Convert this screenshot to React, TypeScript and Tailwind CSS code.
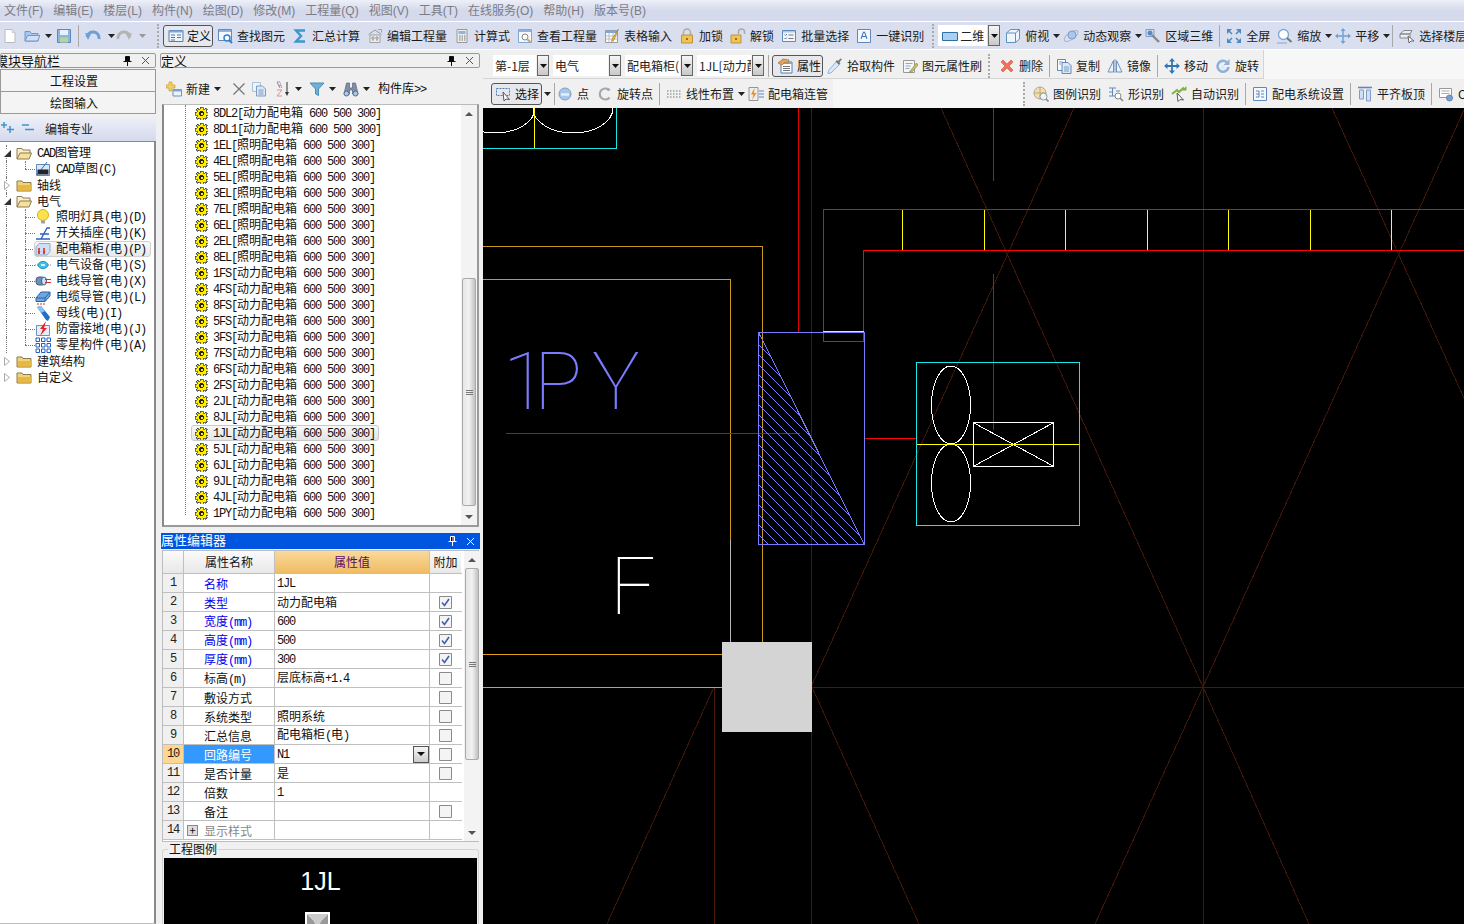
import type { ReactNode } from "react";

const CJK = '"Noto Sans CJK SC", sans-serif';

// Latin runs sit at half width (6px) beside the 12px CJK text, like a bitmap UI font
function T({ children }: { children: string }) {
  const parts = children.split(/([\x20-\x7e]+)/).filter(Boolean);
  return (
    <span className="whitespace-pre">
      {parts.map((p, i) =>
        /^[\x20-\x7e]/.test(p) ? (
          <span key={i} className="font-['Liberation_Mono',monospace] text-[12px] tracking-[-1.2px]">{p}</span>
        ) : (
          <span key={i}>{p}</span>
        )
      )}
    </span>
  );
}

function Ico({ children, size = 16 }: { children: ReactNode; size?: number }) {
  return (
    <svg width={size} height={size} viewBox="0 0 16 16" className="shrink-0" fill="none">
      {children}
    </svg>
  );
}

const Arrow = ({ ml = "ml-[4px]", dim }: { ml?: string; dim?: boolean }) => (
  <svg width="7" height="4" viewBox="0 0 7 4" className={`shrink-0 ${ml}`}>
    <path d="M0 0h7L3.5 4z" fill={dim ? "#999" : "#222"} />
  </svg>
);

const Grip = ({ ml }: { ml: string }) => (
  <div className={`h-[24px] w-[2px] shrink-0 border-l-2 border-dotted border-[#aaa] ${ml}`} />
);

const Sep = ({ ml = "ml-[6px]" }: { ml?: string }) => (
  <div className={`h-[22px] w-px shrink-0 bg-[#a8a8a8] ${ml}`} />
);

function Tool({ icon, label, ml = "ml-[7px]", arrow }: { icon: ReactNode; label: string; ml?: string; arrow?: boolean }) {
  return (
    <div className={`flex shrink-0 items-center ${ml}`}>
      {icon}
      <span className="ml-[4px] whitespace-nowrap text-[12px] leading-none text-[#1a1a1a]">{label}</span>
      {arrow && <Arrow />}
    </div>
  );
}

function Pressed({ icon, label, className }: { icon: ReactNode; label: string; className: string }) {
  return (
    <div className={`flex h-[22px] shrink-0 items-center rounded-[3px] border border-[#555] bg-[#e6e8ee] pl-[4px] ${className}`}>
      {icon}
      <span className="ml-[3px] whitespace-nowrap text-[12px] leading-none text-[#111]">{label}</span>
    </div>
  );
}

function Combo({ label, w, ml = "ml-[4px]" }: { label: string; w: string; ml?: string }) {
  return (
    <div className={`flex h-[21px] shrink-0 items-center ${ml}`}>
      <div className={`flex h-full items-center overflow-hidden whitespace-nowrap bg-white pl-[2px] text-[12px] text-[#222] ${w}`}>{label}</div>
      <div className="ml-px flex h-full w-[12px] items-center justify-center border border-[#666] bg-gradient-to-b from-[#f6f6f6] to-[#c8c8c8]">
        <svg width="7" height="4" viewBox="0 0 7 4"><path d="M0 0h7L3.5 4z" fill="#111" /></svg>
      </div>
    </div>
  );
}

function PanelHead({ title, titleClass = "" }: { title: string; titleClass?: string }) {
  return (
    <div className="flex h-[15px] items-center overflow-x-clip rounded-[2px] border border-[#9a9a9a] bg-[#f0f0f0]">
      <span className={`whitespace-nowrap text-[13px] leading-none text-[#111] ${titleClass}`}>{title}</span>
      <div className="flex-1" />
      <PinClose color="#111" />
    </div>
  );
}

const PinClose = ({ color }: { color: string }) => (
  <div className="flex items-center gap-[9px] pr-[5px]">
    <svg width="9" height="10" viewBox="0 0 9 10"><path d="M2.5.5h4v5h-4zM5 1v4.5M.5 5.5h8M4.5 5.5V10" stroke={color} /></svg>
    <svg width="9" height="9" viewBox="0 0 9 9"><path d="M1 1l7 7M8 1L1 8" stroke={color === "#fff" ? "#fff" : "#555"} /></svg>
  </div>
);

function ScrollBar({ top, thumb, className }: { top: string; thumb: string; className: string }) {
  return (
    <div className={`flex w-[16px] shrink-0 flex-col items-center bg-[#f3f3f3] ${className}`}>
      <div className="flex h-[17px] items-center justify-center">
        <svg width="8" height="4" viewBox="0 0 8 4"><path d="M4 0l4 4H0z" fill="#555" /></svg>
      </div>
      <div className={top} />
      <div className={`flex w-[14px] flex-col justify-center rounded-[2px] border border-[#aaa] bg-gradient-to-r from-[#e6e6e6] via-[#f2f2f2] to-[#c0c0c0] ${thumb}`}>
        <div className="mx-auto flex w-[7px] flex-col gap-px">
          <div className="h-px bg-[#777]" /><div className="h-px bg-[#777]" /><div className="h-px bg-[#777]" />
        </div>
      </div>
      <div className="flex-1" />
      <div className="flex h-[16px] items-center justify-center">
        <svg width="8" height="4" viewBox="0 0 8 4"><path d="M0 0h8L4 4z" fill="#555" /></svg>
      </div>
    </div>
  );
}

/* ---- toolbar icons ---- */
const I = {
  doc: <Ico><path d="M3 1.5h7l3 3v10H3z" fill="#fff" stroke="#bbb" /><path d="M10 1.5v3h3" stroke="#ccc" /></Ico>,
  open: <Ico><path d="M1 13V3.5h5l1.5 2H14V13z" fill="#a9c6ec" stroke="#6f97cc" /><path d="M1 13l2.5-5.5H16L13.5 13z" fill="#cfe0f6" stroke="#6f97cc" /></Ico>,
  save: <Ico><path d="M1.5 1.5h13v13h-13z" fill="#8fb4e0" stroke="#5f88bd" /><path d="M4 2h8v5H4z" fill="#e8f0fa" /><path d="M4 9.5h8v5H4z" fill="#b5d59a" /></Ico>,
  undo: <Ico><path d="M2 9a6 6 0 0 1 12 2" stroke="#6f9fd6" strokeWidth="3" /><path d="M0 5l6 1-3 6z" fill="#6f9fd6" /></Ico>,
  redo: <Ico><path d="M14 9a6 6 0 0 0-12 2" stroke="#b4b4b4" strokeWidth="3" /><path d="M16 5l-6 1 3 6z" fill="#b4b4b4" /></Ico>,
  define: <Ico><path d="M1 2.5h14v11H1z" fill="#eef4fb" stroke="#4f7fb5" /><path d="M1 2.5h14v2H1z" fill="#7fa8d6" /><path d="M3 7h4M3 9.5h4M3 12h4M9 7h4M9 9.5h4" stroke="#55789f" /></Ico>,
  find: <Ico><path d="M1.5 1.5h13v11h-13z" fill="#f4f8fc" stroke="#5f88bd" /><path d="M2 2h12v2H2z" fill="#8fb4e0" /><circle cx="10" cy="10" r="3" fill="#fff" stroke="#2f7fc8" strokeWidth="1.4" /><path d="M12 12l3 3" stroke="#2f7fc8" strokeWidth="2" /></Ico>,
  sigma: <Ico><path d="M13 2.5H4l5 5.5-5 5.5h9" stroke="#3c95d0" strokeWidth="2.4" /></Ico>,
  edit: <Ico><path d="M1.5 6.5L8 2l6.5 4.5" stroke="#999" /><path d="M3 7h10v7.5H3z" fill="#eee" stroke="#a0a0a0" /><path d="M5 9h2v2H5zM9 9h2v2H9zM5 12h2M9 12h2" stroke="#999" /><path d="M11 1.5h3.5v3" stroke="#7fa8d6" /></Ico>,
  calc: <Ico><path d="M3 1.5h10v13H3z" fill="#eee" stroke="#999" /><path d="M4.5 3h7v3h-7z" fill="#8fb4e0" /><path d="M5 8h1.5M7.5 8H9M10 8h1.5M5 10h1.5M7.5 10H9M10 10h1.5M5 12h1.5M7.5 12H9M10 12h1.5" stroke="#777" /></Ico>,
  look: <Ico><path d="M1.5 1.5h13v13h-13z" fill="#f6f8fb" stroke="#7fa8d6" /><path d="M2 2h12v2H2z" fill="#8fb4e0" /><circle cx="8" cy="9" r="3" fill="#fff" stroke="#888" /><path d="M10.5 11.5l3 2.5" stroke="#d9a441" strokeWidth="2" /></Ico>,
  table: <Ico><path d="M1.5 2.5h12v12h-12z" fill="#fff" stroke="#999" /><path d="M1.5 2.5h12v2.5h-12z" fill="#7fa8d6" /><path d="M1.5 8h12M1.5 11h12M5 5v9.5M9 5v9.5" stroke="#bbb" /><path d="M14.5 1L8 11l-.5 2.5L10 12z" fill="#e8b83a" stroke="#a87f1e" strokeWidth=".6" /></Ico>,
  lock: <Ico><path d="M4.5 7V4.5a3.5 3.5 0 0 1 7 0V7" stroke="#aaa" strokeWidth="1.5" /><path d="M2.5 7h11v8h-11z" fill="#f0c453" stroke="#c0923a" /><path d="M7 10h2v2H7z" fill="#9a6f20" /></Ico>,
  unlock: <Ico><path d="M8.5 6V4a3 3 0 0 1 6 0v2" stroke="#aaa" strokeWidth="1.5" /><path d="M1 7h10v8H1z" fill="#f0c453" stroke="#c0923a" /><path d="M5 10h2v2H5z" fill="#9a6f20" /></Ico>,
  batch: <Ico><path d="M1.5 2.5h13v11h-13z" fill="#f4f8fc" stroke="#5f88bd" /><path d="M2 3h12v1.5H2z" fill="#a9c6ec" /><path d="M3.5 6.5l1 1 1.5-1.5M3.5 10l1 1 1.5-1.5" stroke="#4a78ad" /><path d="M7.5 7h5M7.5 10.5h5" stroke="#777" /></Ico>,
  ocr: <Ico><path d="M1.5 1.5h13v13h-13z" fill="#f4f8fc" stroke="#5f88bd" /><path d="M5 11l2.5-7h1l2.5 7M6 8.5h4" stroke="#2f6fb5" /></Ico>,
  view2d: <Ico><path d="M.5 4.5h15v8H.5z" fill="#a9d0ee" stroke="#2f6fa8" /></Ico>,
  cube: <Ico><path d="M1.5 5l4-3.5h9v9.5l-4 3.5h-9z" fill="#eef6fb" stroke="#5c93bd" /><path d="M1.5 5h9v9.5M10.5 5l4-3.5" stroke="#5c93bd" /></Ico>,
  orbit: <Ico><ellipse cx="8" cy="8" rx="8" ry="3.5" transform="rotate(-35 8 8)" stroke="#a9b6c8" /><circle cx="9" cy="7" r="4" fill="#a9c6ec" stroke="#7f9cc4" /></Ico>,
  zone: <Ico><path d="M1 1.5h8v7H1z" fill="#cfe0f6" stroke="#7f9cc4" /><circle cx="5" cy="5" r="2.5" fill="#5f88bd" /><path d="M7 7l7 7" stroke="#888" strokeWidth="2.4" /></Ico>,
  full: <Ico><path d="M1 1h5L1 6zM15 1h-5l5 5zM1 15h5l-5-5zM15 15h-5l5-5z" fill="#4a8bc4" /><path d="M3 3l3 3M13 3l-3 3M3 13l3-3M13 13l-3-3" stroke="#4a8bc4" strokeWidth="1.5" /></Ico>,
  zoom: <Ico><circle cx="6.5" cy="6.5" r="5" fill="#fff" stroke="#7fa8d6" strokeWidth="1.4" /><path d="M10 10l4.5 4" stroke="#777" strokeWidth="2" /><path d="M0 15h10" stroke="#7fa8d6" /></Ico>,
  pan: <Ico><path d="M8 1v14M1 8h14" stroke="#6fa0d6" strokeWidth="1.4" /><path d="M8 0l2.5 3h-5zM8 16l2.5-3h-5zM0 8l3-2.5v5zM16 8l-3-2.5v5z" fill="#6fa0d6" /></Ico>,
  floors: <Ico><path d="M1 6l4-3.5h8L11 6zM1 6h10v4H1z" fill="#e8eef6" stroke="#888" /><path d="M9 8l1 7 2-2 3 0z" fill="#fff" stroke="#666" /></Ico>,
  prop: <Ico><path d="M3 4h11v11H3z" fill="#fff" stroke="#4f7fb5" /><path d="M3 4h11v2H3z" fill="#7fa8d6" /><path d="M5 8.5h7M5 10.5h7M5 12.5h7" stroke="#777" /><path d="M0 5l5-4 6 1-1 3-3-.5-3 2.5z" fill="#e2a25c" stroke="#a8702e" strokeWidth=".7" /></Ico>,
  pick: <Ico><path d="M15 1l-1.5-.5-2.5 2.5-1-1-1.5 1.5 3.5 3.5L13.5 5.5l-1-1z" fill="#777" /><path d="M9 4l3 3-8 8-3 .5.5-3z" fill="#dbe8f5" stroke="#8fb4e0" /></Ico>,
  brush: <Ico><path d="M1.5 2.5h11v12h-11z" fill="#f6f6f6" stroke="#999" /><path d="M3.5 5.5h7M3.5 8h5M3.5 10.5h4" stroke="#8fa8c4" /><path d="M14.5 5L9 12l-2 2.5 3.5-1L16 7z" fill="#c8c070" stroke="#8c8440" strokeWidth=".7" /></Ico>,
  del: <Ico><path d="M2 4l2-2 4 4 4-4 2 2-4 4 4 4-2 2-4-4-4 4-2-2 4-4z" fill="#f0705c" stroke="#d0503c" strokeWidth=".6" /></Ico>,
  copy: <Ico><path d="M1.5 1.5h8v11h-8z" fill="#fff" stroke="#5f88bd" /><path d="M6 4.5h6l3 3v8H6z" fill="#dbe8f5" stroke="#5f88bd" /><path d="M3 4h4M3 6h2M8 9h5M8 11h5M8 13h5" stroke="#7f9cc4" /></Ico>,
  mirror: <Ico><path d="M8 1v14" stroke="#7f9cc4" /><path d="M6.5 2.5V14H1zM9.5 2.5V14H15z" fill="#eef4fb" stroke="#6f8fc0" /></Ico>,
  move: <Ico><path d="M8 1v14M1 8h14" stroke="#2f78b8" strokeWidth="1.8" /><path d="M8 0l3 3.5H5zM8 16l3-3.5H5zM0 8l3.5-3v6zM16 8l-3.5-3v6z" fill="#2f78b8" /></Ico>,
  rotate: <Ico><path d="M13.5 9a5.5 5.5 0 1 1-2-5" stroke="#8fb0d8" strokeWidth="2.6" /><path d="M14.5 1v6h-6z" fill="#8fb0d8" /><circle cx="8" cy="9" r="2" fill="#dbe8f5" /></Ico>,
  select: <Ico><path d="M.5 2.5h13v7H.5z" stroke="#4f7fb5" strokeDasharray="2 1" /><path d="M7 6l1 9 2-2 3.5.5z" fill="#fff" stroke="#555" /></Ico>,
  point: <Ico><circle cx="8" cy="8" r="6" fill="#a9c6ec" stroke="#7f9cc4" /><path d="M4 8.5h8" stroke="#e8f0fa" strokeWidth="2.4" /></Ico>,
  rotPoint: <Ico><path d="M12.5 11.5a5.5 5.5 0 1 1 0-7" stroke="#a0a8b0" strokeWidth="2.2" /><path d="M9 1.5l1.5 3.5 3-2z" fill="#a0a8b0" /></Ico>,
  linear: <Ico><path d="M1 5h1.5M4 5h1.5M7 5h1.5M10 5h1.5M13 5h1.5M1 8h1.5M4 8h1.5M7 8h1.5M10 8h1.5M13 8h1.5M1 11h1.5M4 11h1.5M7 11h1.5M10 11h1.5M13 11h1.5" stroke="#777" /></Ico>,
  conduit: <Ico><path d="M1 1.5h9v13H1z" fill="#eee" stroke="#8c98a8" /><path d="M6.5 2L3 8.5h2.5L4 14l4.5-7H6z" fill="#e89020" /><path d="M11 5h5M11 8h5M11 11h5" stroke="#5f88bd" /></Ico>,
  legend: <Ico><circle cx="7" cy="7" r="6" fill="#f2ddb0" stroke="#a8a8a8" /><path d="M1 7h12M7 1v12" stroke="#c8a860" /><circle cx="10.5" cy="10.5" r="3.5" fill="#fff" fillOpacity=".7" stroke="#7f9cc4" /><path d="M13 13l2.5 2.5" stroke="#888" strokeWidth="1.6" /></Ico>,
  shape: <Ico><path d="M1 2h7M4.5 2v8M1 6h3M8 5h4M1 10h6" stroke="#5f88bd" /><circle cx="10" cy="10" r="3" fill="#fff" stroke="#888" /><path d="M12 12l3 3" stroke="#888" strokeWidth="1.6" /></Ico>,
  auto: <Ico><path d="M1 8l5-4 2 2 5-4.5" stroke="#7fb040" strokeWidth="2" /><path d="M15.5 0v4.5H11z" fill="#7fb040" /><path d="M6 7l1 8.5 2-2 3.5.5z" fill="#fff" stroke="#555" /></Ico>,
  sys: <Ico><path d="M1.5 1.5h13v13h-13z" fill="#f4f8fc" stroke="#5f88bd" /><path d="M4 5h3M4 8h3M4 11h3M9 5h3M9 8h3M9 11h3M7 5v6" stroke="#5f88bd" /></Ico>,
  align: <Ico><path d="M1 1.5h14" stroke="#5f88bd" strokeWidth="1.6" /><path d="M2.5 4h4v9h-4zM9.5 4h4v11h-4z" fill="#cfe0f6" stroke="#7f9cc4" /></Ico>,
  cad: <Ico><path d="M1.5 2.5h12v9h-12z" fill="#fff" stroke="#999" /><path d="M3.5 5h8M3.5 7.5h8" stroke="#aaa" /><circle cx="11.5" cy="12" r="3" fill="#7f9cc4" stroke="#5f88bd" /></Ico>,
  add: <Ico><path d="M0 4h3V1h3v3h3v3H6v3H3V7H0z" fill="#f0d060" stroke="#c8a030" strokeWidth=".7" /><path d="M7 8.5h8.5V15H7z" fill="#eef4fb" stroke="#6f8fc0" /><path d="M7 8.5h8.5v2H7z" fill="#7fa8d6" /></Ico>,
  x: <Ico><path d="M2.5 2.5l11 11M13.5 2.5l-11 11" stroke="#777" strokeWidth="1.3" /></Ico>,
  copy2: <Ico><path d="M1.5 1.5h8v9h-8z" fill="#eef4fb" stroke="#a9c0dc" /><path d="M5.5 5h6l3 3v7h-9z" fill="#dbe8f5" stroke="#7f9cc4" /><path d="M7.5 9h5M7.5 11h5M7.5 13h5" stroke="#7f9cc4" /></Ico>,
  sort: <Ico><path d="M2 1l2.5-.5L7 7M3 4.5h3M2 9h5l-5 6h5" stroke="#e09090" /><path d="M2 1l3 6" stroke="#6f8fc0" /><path d="M12 1v12" stroke="#333" /><path d="M10 11l2 4 2-4z" fill="#333" /></Ico>,
  filter: <Ico><path d="M1 2h14l-5.5 6v6.5l-3-1.5V8z" fill="#6fb0d8" stroke="#4a8fb8" /></Ico>,
  bino: <Ico><path d="M3.5 2h3v5h3V2h3l2.5 11h-5.5V9h-3v4H1z" fill="#7f8ea8" stroke="#5a6880" strokeWidth=".7" /><circle cx="3.5" cy="12.5" r="2.5" fill="#a9c6ec" stroke="#5a6880" /><circle cx="12.5" cy="12.5" r="2.5" fill="#a9c6ec" stroke="#5a6880" /></Ico>,
};

/* ---- tree icons ---- */
const FolderClosed = <Ico><path d="M1 4h5l1 1.5h8V14H1z" fill="#f3d27e" stroke="#8a7a50" /><path d="M2 8h13v5.5H2z" fill="#e8b93e" /></Ico>;
const FolderOpen = <Ico><path d="M1 14V3.5h5l1 1.5h7v3" fill="#fbeec8" stroke="#8a7a50" /><path d="M1 14l3-6h11.5L13 14z" fill="#f7dfa0" stroke="#8a7a50" /></Ico>;
const treeIcons: Record<string, ReactNode> = {
  cad: <Ico><path d="M1.5 3.5h13v11h-13z" fill="#dbe8f5" stroke="#5f88bd" /><path d="M2 14l10-13" stroke="#2f6fb5" /><path d="M2.5 8.5h11v5h-11z" fill="#223" /></Ico>,
  lamp: <Ico><circle cx="8" cy="6" r="5.5" fill="#fbe24a" stroke="#d8b020" /><path d="M6 11.5h4v3H6z" fill="#a0a0a0" /></Ico>,
  sw: <Ico><path d="M1 14h5L12 3h3M6 14h9M5 9h9" stroke="#2f5fc0" strokeWidth="1.3" /></Ico>,
  box: <Ico><path d="M1 6l3-3.5h11v8l-3 3.5H1z" fill="#cfe0f6" stroke="#8fa8c4" /><path d="M4 7v6M9 7v6" stroke="#d83020" strokeWidth="1.6" /><path d="M2.5 10.5L4 13l1.5-2.5zM7.5 10.5L9 13l1.5-2.5z" fill="#d83020" /></Ico>,
  dev: <Ico><path d="M0 8h5M11 8h5" stroke="#888" strokeDasharray="1 1" /><ellipse cx="8" cy="8" rx="5" ry="3.5" fill="#40c0e8" stroke="#2090b8" /><path d="M6 8h4" stroke="#fff" strokeWidth="1.5" /></Ico>,
  wire: <Ico><rect x="1" y="4" width="9" height="8" rx="3" fill="#6f8fb5" stroke="#3f5f85" /><ellipse cx="9" cy="8" rx="2.5" ry="4" fill="#cfe0f6" stroke="#3f5f85" /><path d="M10 6.5h6M10 9.5h6" stroke="#d83020" /></Ico>,
  cable: <Ico><path d="M1 9l5-6h9v4l-5 5.5H1z" fill="#6fa8e0" stroke="#2f5fa8" /><path d="M1 9h9v3.5M10 9l5-6" stroke="#2f5fa8" /><path d="M3 14v2M6 14v2M9 14v2" stroke="#d83020" /></Ico>,
  bus: <Ico><path d="M2 2l4-1 9 11-2 4-2-1z" fill="#1f6fc8" /><path d="M2 2l4-1 4 5-4 2z" fill="#8fc0ec" /></Ico>,
  thunder: <Ico><path d="M1.5 4.5h13v10h-13z" fill="#e4eef9" stroke="#6f8fc0" /><path d="M11 0L5 8h3l-3 7 7-8H9z" fill="#e82020" /></Ico>,
  parts: <Ico><path d="M1 1h3.5v3.5H1zM6.5 1H10v3.5H6.5zM12 1h3.5v3.5H12zM1 6.5h3.5V10H1zM6.5 6.5H10V10H6.5zM12 6.5h3.5V10H12zM1 12h3.5v3.5H1zM6.5 12H10v3.5H6.5zM12 12h3.5v3.5H12z" fill="#fff" stroke="#1f5fc8" /></Ico>,
};

const treeChildren = [
  { k: "lamp", t: "照明灯具(电)(D)" },
  { k: "sw", t: "开关插座(电)(K)" },
  { k: "box", t: "配电箱柜(电)(P)", sel: true },
  { k: "dev", t: "电气设备(电)(S)" },
  { k: "wire", t: "电线导管(电)(X)" },
  { k: "cable", t: "电缆导管(电)(L)" },
  { k: "bus", t: "母线(电)(I)" },
  { k: "thunder", t: "防雷接地(电)(J)" },
  { k: "parts", t: "零星构件(电)(A)" },
];

function Top({ open, label, line = true }: { open: boolean; label: string; line?: boolean }) {
  return (
    <div className="relative flex h-[16px] items-center">
      {line && <div className="absolute left-[6px] top-0 h-full border-l border-dotted border-[#777]" />}
      <div className="relative z-10 ml-[3px] flex w-[8px] justify-center bg-white">
        {open ? (
          <svg width="7" height="7" viewBox="0 0 7 7"><path d="M7 0v7H0z" fill="#333" /></svg>
        ) : (
          <svg width="6" height="9" viewBox="0 0 6 9"><path d="M.5.5l5 4-5 4z" fill="#fff" stroke="#aaa" /></svg>
        )}
      </div>
      <div className="ml-[5px]">{open ? FolderOpen : FolderClosed}</div>
      <span className="ml-[5px] text-[12px] leading-none text-[#111]"><T>{label}</T></span>
    </div>
  );
}

function Child({ icon, label, sel, last }: { icon: ReactNode; label: string; sel?: boolean; last?: boolean }) {
  return (
    <div className="relative flex h-[16px] items-center pl-[35px]">
      <div className="absolute left-[6px] top-0 h-full border-l border-dotted border-[#777]" />
      <div className={`absolute left-[25px] top-0 border-l border-dotted border-[#777] ${last ? "h-[8px]" : "h-full"}`} />
      <div className="absolute left-[25px] top-[8px] w-[10px] border-t border-dotted border-[#777]" />
      {sel && <div className="absolute left-[34px] top-0 h-[16px] w-[117px] rounded-[3px] border border-[#d0d0d0] bg-gradient-to-b from-[#fafafa] to-[#e8e8e8]" />}
      <div className="relative">{icon}</div>
      <span className="relative ml-[5px] text-[12px] leading-none text-[#111]"><T>{label}</T></span>
    </div>
  );
}

const listRows = [
  ["8DL2", "动力"], ["8DL1", "动力"], ["1EL", "照明"], ["4EL", "照明"], ["5EL", "照明"], ["3EL", "照明"], ["7EL", "照明"],
  ["6EL", "照明"], ["2EL", "照明"], ["8EL", "照明"], ["1FS", "动力"], ["4FS", "动力"], ["8FS", "动力"], ["5FS", "动力"],
  ["3FS", "动力"], ["7FS", "动力"], ["6FS", "动力"], ["2FS", "动力"], ["2JL", "动力"], ["8JL", "动力"], ["1JL", "动力"],
  ["5JL", "动力"], ["6JL", "动力"], ["9JL", "动力"], ["4JL", "动力"], ["1PY", "动力"],
];

const Gear = () => (
  <svg width="13" height="13" viewBox="0 0 13 13" className="shrink-0" shapeRendering="crispEdges">
    <path d="M5 0h3v2h2V1h1v1h1v1h-1v2h2v3h-2v2h1v1h-1v1h-1v-1H8v2H5v-2H3v1H2v-1H1v-1h1V8H0V5h2V3H1V2h1V1h1v1h2z" fill="#ffee00" stroke="#222" strokeWidth=".6" />
    <path d="M5 4h3v1h1v3H8v1H5V8H4V5h1z" fill="#222" />
    <path d="M5.500 5.500h2v2h-2z" fill="#ffee00" />
  </svg>
);

type Prop = { name: string; value: string; blue?: boolean; check?: boolean; none?: boolean; active?: boolean; gray?: boolean };
const props: Prop[] = [
  { name: "名称", value: "1JL", blue: true, none: true },
  { name: "类型", value: "动力配电箱", blue: true, check: true },
  { name: "宽度(mm)", value: "600", blue: true, check: true },
  { name: "高度(mm)", value: "500", blue: true, check: true },
  { name: "厚度(mm)", value: "300", blue: true, check: true },
  { name: "标高(m)", value: "层底标高+1.4" },
  { name: "敷设方式", value: "" },
  { name: "系统类型", value: "照明系统" },
  { name: "汇总信息", value: "配电箱柜(电)" },
  { name: "回路编号", value: "N1", active: true },
  { name: "是否计量", value: "是" },
  { name: "倍数", value: "1", none: true },
  { name: "备注", value: "" },
  { name: "显示样式", value: "", none: true, gray: true },
];

function PropRow({ p, n }: { p: Prop; n: number }) {
  return (
    <div className="flex h-[19px] border-b border-[#c0c0c0] text-[12px] leading-none">
      <div className={`flex w-[21px] shrink-0 items-center justify-center border-r border-[#c0c0c0] text-[#222] ${p.active ? "bg-[#ffd68f]" : "bg-[#f0f0f0]"}`}>
        <span className="font-['Liberation_Mono',monospace] text-[12px] tracking-[-1.2px]">{n}</span>
      </div>
      <div className={`relative flex w-[91px] shrink-0 items-center border-r border-[#c0c0c0] pl-[20px] pt-px ${p.active ? "bg-[#3399ff] text-white" : p.blue ? "text-[#0000ee]" : p.gray ? "text-[#888]" : "text-[#111]"}`}>
        {p.gray && (
          <div className="absolute left-[3px] flex h-[11px] w-[11px] items-center justify-center border border-[#888] bg-[#ddd] text-[11px] text-[#111]">+</div>
        )}
        <T>{p.name}</T>
      </div>
      <div className="flex w-[155px] shrink-0 items-center border-r border-[#c0c0c0] pl-[2px] text-[#111]">
        <T>{p.value}</T>
        {p.active && (
          <div className="ml-auto flex h-[17px] w-[16px] items-center justify-center border border-[#555] bg-gradient-to-b from-[#f6f6f6] to-[#ccc]">
            <svg width="8" height="4" viewBox="0 0 8 4"><path d="M0 0h8L4 4z" fill="#111" /></svg>
          </div>
        )}
      </div>
      <div className="flex w-[31px] shrink-0 items-center justify-center">
        {!p.none && (
          <svg width="13" height="13" viewBox="0 0 13 13">
            <path d="M.5.5h12v12H.5z" fill="#f4f4f4" stroke="#8a8a8a" />
            {p.check && <path d="M3 6.5l2.5 3L10 3" stroke="#3f5fa8" strokeWidth="1.6" fill="none" />}
          </svg>
        )}
      </div>
    </div>
  );
}

const BROWN = "#4a1a08";
const PURPLE = "#7b7bff";

function CadCanvas() {
  const yellowTicks = [902, 984, 1065, 1147, 1228, 1310, 1391];
  const hatch = Array.from({ length: 22 }, (_, i) => 335 + i * 10);
  const diag = [
    [1074, 108, 811, 687], [941, 108, 1203, 687], [1332, 108, 1464, 398], [1464, 110, 1203, 687],
    [812, 687, 919, 924], [1203, 687, 1095, 924], [1203, 687, 1309, 924], [714, 687, 607, 924],
  ];
  return (
    <svg className="block h-full w-full" viewBox="483 108 981 816" shapeRendering="crispEdges" fill="none">
      {diag.map((d, i) => (
        <line key={i} x1={d[0]} y1={d[1]} x2={d[2]} y2={d[3]} stroke="#3f1508" />
      ))}
      <path d="M811.5 108V924M812 687.5H1464M714.5 687V924M1203.5 108V687" stroke={BROWN} />
      <path d="M1203.5 687V924" stroke="#222" />

      {/* top-left unit */}
      <path d="M483 148.5H616.5V108" stroke="#19e6e6" />
      <ellipse cx="573" cy="108" rx="40" ry="25" stroke="#fff" />
      <ellipse cx="495" cy="108" rx="40" ry="25" stroke="#fff" />
      <path d="M534.5 108V148" stroke="#ffff00" />

      {/* pipes */}
      <path d="M483 246.5H762.5V642" stroke="#c89a1a" />
      <path d="M483 279.5H730.5V540" stroke="#c89a1a" />
      <path d="M730.5 540V642" stroke="#b8b8b8" />
      <path d="M483 654.5H722M483 687.5H722" stroke="#e0a010" />

      {/* red runs */}
      <path d="M798.5 108V332M993.5 108V181M993.5 274V430M506 433.5H800" stroke="#e00000" />
      <path d="M1464 209.5H823.5V341.5H863.5V250.5H1464M864 438.5H916" stroke="#ff0000" />
      <path d="M823 331.5H864" stroke="#ffff00" />
      {yellowTicks.map((x) => (
        <line key={x} x1={x + 0.5} y1={210} x2={x + 0.5} y2={250} stroke="#ffff00" />
      ))}

      {/* distribution box */}
      <clipPath id="hatchClip"><polygon points="759,333 864,544 759,544" /></clipPath>
      <g clipPath="url(#hatchClip)">
        {hatch.map((y) => (
          <line key={y} x1={759} y1={y} x2={900} y2={y + 141} stroke={PURPLE} />
        ))}
      </g>
      <path d="M758.5 332.5H864.5V544.5H758.5ZM759 333L864 544" stroke={PURPLE} />

      {/* fan unit */}
      <path d="M916.5 362.5H1079.5V525.5H916.5Z" stroke="#19e6e6" />
      <ellipse cx="951" cy="405" rx="19.5" ry="39" stroke="#fff" />
      <ellipse cx="951" cy="483" rx="19.5" ry="39" stroke="#fff" />
      <path d="M973.5 422.5H1053.5V466.5H973.5ZM974 423L1053 466M1053 423L974 466" stroke="#fff" />
      <path d="M917 444.5H1079" stroke="#ffff00" />

      <rect x="722" y="642" width="90" height="90" fill="#d4d4d4" />

      <text x="503 534 592" y="409" fontSize="80" fontWeight="100" fill={PURPLE} style={{ fontFamily: "Roboto, sans-serif" }} shapeRendering="auto">1PY</text>
      <text x="610" y="614" fontSize="80" fontWeight="100" fill="#fff" style={{ fontFamily: "Roboto, sans-serif" }} shapeRendering="auto">F</text>
    </svg>
  );
}

export default function App() {
  return (
    <div className="flex h-[924px] w-[1464px] flex-col overflow-hidden bg-[#f0f0f0]" style={{ fontFamily: CJK }}>
      {/* menu */}
      <div className="flex h-[22px] items-center gap-[10px] border-b border-white bg-gradient-to-b from-[#eef0f8] via-[#d4d9ec] to-[#d4d9ec] pl-[4px] font-['Liberation_Sans','Noto_Sans_CJK_SC',sans-serif] text-[12px] leading-none text-[#7c7c84]">
        {["文件(F)", "编辑(E)", "楼层(L)", "构件(N)", "绘图(D)", "修改(M)", "工程量(Q)", "视图(V)", "工具(T)", "在线服务(O)", "帮助(H)", "版本号(B)"].map((m) => (
          <span key={m} className="whitespace-nowrap">{m}</span>
        ))}
      </div>

      {/* main toolbar */}
      <div className="flex h-[28px] items-center overflow-hidden border-b border-white bg-[#d9dfee]">
        <div className="ml-[2px]">{I.doc}</div>
        <div className="ml-[6px]">{I.open}</div>
        <Arrow ml="ml-[5px]" />
        <div className="ml-[4px]">{I.save}</div>
        <Sep />
        <div className="ml-[6px]">{I.undo}</div>
        <Arrow ml="ml-[7px]" />
        <div className="ml-px">{I.redo}</div>
        <Arrow ml="ml-[7px]" dim />
        <Grip ml="ml-[11px]" />
        <Pressed icon={I.define} label="定义" className="ml-[4px] w-[50px]" />
        <Tool icon={I.find} label="查找图元" ml="ml-[4px]" />
        <Tool icon={I.sigma} label="汇总计算" />
        <Tool icon={I.edit} label="编辑工程量" />
        <Tool icon={I.calc} label="计算式" />
        <Tool icon={I.look} label="查看工程量" />
        <Tool icon={I.table} label="表格输入" />
        <Tool icon={I.lock} label="加锁" />
        <Tool icon={I.unlock} label="解锁" />
        <Tool icon={I.batch} label="批量选择" />
        <Tool icon={I.ocr} label="一键识别" />
        <Grip ml="ml-[8px]" />
        <div className="ml-[4px] flex h-[21px] shrink-0 items-center">
          <div className="flex h-full w-[49px] items-center gap-[2px] bg-white pl-[4px] text-[12px] leading-none text-[#222]">{I.view2d}<span>二维</span></div>
          <div className="ml-px flex h-full w-[12px] items-center justify-center border border-[#666] bg-gradient-to-b from-[#f6f6f6] to-[#c8c8c8]">
            <svg width="7" height="4" viewBox="0 0 7 4"><path d="M0 0h7L3.5 4z" fill="#111" /></svg>
          </div>
        </div>
        <Tool icon={I.cube} label="俯视" ml="ml-[5px]" arrow />
        <Tool icon={I.orbit} label="动态观察" ml="ml-[3px]" arrow />
        <Tool icon={I.zone} label="区域三维" ml="ml-[3px]" />
        <Sep />
        <Tool icon={I.full} label="全屏" ml="ml-[6px]" />
        <Tool icon={I.zoom} label="缩放" arrow />
        <Tool icon={I.pan} label="平移" ml="ml-[3px]" arrow />
        <Sep ml="ml-[2px]" />
        <Tool icon={I.floors} label="选择楼层" ml="ml-[6px]" />
      </div>

      <div className="flex min-h-0 flex-1">
        {/* module navigation */}
        <div className="flex w-[160px] shrink-0 flex-col pr-[4px] pt-[3px]">
          <PanelHead title="模块导航栏" titleClass="-ml-[6px]" />
          <div className="mt-[1px] flex h-[23px] items-center justify-center border border-[#999] bg-[#f4f4f4] pr-[8px] text-[12px] leading-none text-[#111]">工程设置</div>
          <div className="flex h-[22px] items-center justify-center border border-t-0 border-[#999] bg-[#f4f4f4] pr-[8px] text-[12px] leading-none text-[#111]">绘图输入</div>
          <div className="mt-[3px] flex h-[24px] items-center bg-gradient-to-b from-[#eef0f8] to-[#d4d9ec] pl-[1px]">
            <svg width="44" height="16" viewBox="0 0 44 16">
              <path d="M3 1v6M0 4h6M9 5v7M6 8.5h7" stroke="#3c95d0" strokeWidth="1.5" />
              <path d="M21 4h7M24 8.5h9" stroke="#3c95d0" strokeWidth="1.5" />
            </svg>
            <span className="text-[12px] leading-none text-[#222]">编辑专业</span>
          </div>
          <div className="min-h-0 flex-1 border-b border-r-2 border-t border-[#8a8a8a] border-b-[#bbb] bg-white pt-[3px]">
            <Top open label="CAD图管理" />
            <Child icon={treeIcons.cad} label="CAD草图(C)" last />
            <Top open={false} label="轴线" />
            <Top open label="电气" />
            {treeChildren.map((c, i) => (
              <Child key={c.k} icon={treeIcons[c.k]} label={c.t} sel={c.sel} last={i === treeChildren.length - 1} />
            ))}
            <Top open={false} label="建筑结构" line={false} />
            <Top open={false} label="自定义" line={false} />
          </div>
        </div>

        {/* definition + property editor */}
        <div className="flex w-[320px] shrink-0 flex-col pt-[3px]">
          <PanelHead title="定义" />
          <div className="flex h-[36px] shrink-0 items-center pl-[6px] pt-[6px]">
            <Tool icon={I.add} label="新建" ml="ml-0" arrow />
            <div className="ml-[10px]">{I.x}</div>
            <div className="ml-[4px]">{I.copy2}</div>
            <div className="ml-[8px]">{I.sort}</div>
            <Arrow />
            <div className="ml-[7px]">{I.filter}</div>
            <Arrow />
            <div className="ml-[7px]">{I.bino}</div>
            <Arrow />
            <span className="ml-[8px] text-[12px] leading-none text-[#111]">构件库<span className="font-['Liberation_Mono',monospace] text-[12px] tracking-[-1.2px]">&gt;&gt;</span></span>
          </div>

          <div className="ml-[2px] mr-px flex h-[423px] shrink-0 overflow-hidden border-2 border-t border-[#9a9a9a] border-l-[#888] border-t-[#bbb] bg-white">
            <div className="min-w-0 flex-1">
              <div className="ml-[21px] flex h-[410px] flex-col border-l border-dotted border-[#777]">
                {listRows.map(([code, kind]) => (
                  <div key={code} className="flex h-[16px] shrink-0 items-center pl-[9px] text-[12px] leading-none text-[#111]">
                    <div className={`flex h-[16px] items-center gap-[5px] ${code === "1JL" ? "-ml-[4px] w-[188px] rounded-[3px] border border-[#c8c8c8] bg-gradient-to-b from-[#f8f8f8] to-[#e4e4e4] pl-[3px]" : ""}`}>
                      <Gear />
                      <T>{`${code}[${kind}配电箱 600 500 300]`}</T>
                    </div>
                  </div>
                ))}
              </div>
            </div>
            <ScrollBar className="h-full" top="h-[156px] shrink-0" thumb="h-[228px]" />
          </div>

          <div className="ml-px mt-[6px] flex h-[16px] shrink-0 items-center bg-[#0055e0]">
            <span className="pb-[3px] text-[13px] leading-none text-white">属性编辑器</span>
            <div className="flex-1" />
            <PinClose color="#fff" />
          </div>

          <div className="ml-[2px] mr-px mt-[1px] flex h-[292px] shrink-0 border border-[#bdbdbd] bg-white">
            <div className="w-[299px] shrink-0">
              <div className="flex h-[23px] border-b border-[#c0c0c0] text-[12px] leading-none">
                <div className="w-[21px] shrink-0 border-r border-[#c0c0c0] bg-gradient-to-b from-[#fafafa] to-[#e8e8e8]" />
                <div className="flex w-[91px] shrink-0 items-center justify-center border-r border-[#c0c0c0] bg-gradient-to-b from-[#fafafa] to-[#e8e8e8] text-[#111]">属性名称</div>
                <div className="flex w-[155px] shrink-0 items-center justify-center border-r border-[#c0c0c0] bg-gradient-to-b from-[#f9d99a] to-[#f0bc62] text-[#5a0a6a]">属性值</div>
                <div className="flex w-[31px] shrink-0 items-center justify-center bg-gradient-to-b from-[#fafafa] to-[#e8e8e8] text-[#111]">附加</div>
              </div>
              {props.map((p, i) => (
                <PropRow key={p.name} p={p} n={i + 1} />
              ))}
            </div>
            <ScrollBar className="ml-[2px] h-full" top="hidden" thumb="h-[192px]" />
          </div>

          <div className="relative ml-[2px] mr-px mt-[7px] flex-1 rounded-t-[3px] border border-b-0 border-[#d4d4d4] pt-[8px]">
            <span className="absolute -top-[7px] left-[5px] bg-[#f0f0f0] px-px text-[12px] leading-none text-[#111]">工程图例</span>
            <div className="mx-[1px] flex h-full flex-col items-center bg-black">
              <span className="mt-[9px] font-['Liberation_Sans',sans-serif] text-[25px] leading-[28px] text-white">1JL</span>
              <svg width="25" height="14" viewBox="0 0 25 14" className="mt-[17px] shrink-0 -translate-x-[3px]" shapeRendering="crispEdges">
                <rect width="25" height="14" fill="#fff" />
                <rect x="2" y="2" width="21" height="12" fill="#999" />
                <path d="M2 2h21L12.5 14z" fill="#ccc" />
              </svg>
            </div>
          </div>
        </div>

        {/* drawing side */}
        <div className="flex min-w-0 flex-1 flex-col pl-[3px]">
          <div className="flex h-[29px] shrink-0 bg-[#f7f7f7]">
            <div className="flex w-[781px] items-center border-b border-r border-[#d4d4d4] bg-[#f0f0f0] pt-[3px]">
              <Combo label="第-1层" w="w-[43px]" ml="ml-[10px]" />
              <Combo label="电气" w="w-[55px]" />
              <Combo label="配电箱柜(电)" w="w-[55px]" />
              <Combo label="1JL[动力配电箱]" w="w-[54px]" />
              <Sep ml="ml-[4px]" />
              <Pressed icon={I.prop} label="属性" className="ml-[3px] w-[51px] pl-[5px]" />
              <Tool icon={I.pick} label="拾取构件" ml="ml-[4px]" />
              <Tool icon={I.brush} label="图元属性刷" />
              <Grip ml="ml-[6px]" />
              <Tool icon={I.del} label="删除" ml="ml-[9px]" />
              <Sep />
              <Tool icon={I.copy} label="复制" ml="ml-[6px]" />
              <Tool icon={I.mirror} label="镜像" />
              <Sep />
              <Tool icon={I.move} label="移动" ml="ml-[6px]" />
              <Tool icon={I.rotate} label="旋转" />
            </div>
          </div>
          <div className="flex h-[29px] shrink-0 items-center justify-between bg-[#f7f7f7]">
            <div className="flex h-full w-[350px] items-center bg-[#f0f0f0]">
              <Pressed icon={I.select} label="选择" className="ml-[8px] w-[51px]" />
              <Arrow ml="ml-[2px]" />
              <Sep ml="ml-[3px]" />
              <Tool icon={I.point} label="点" ml="ml-[2px]" />
              <Tool icon={I.rotPoint} label="旋转点" ml="ml-[8px]" />
              <Sep />
              <Tool icon={I.linear} label="线性布置" ml="ml-[6px]" arrow />
              <Tool icon={I.conduit} label="配电箱连管" ml="ml-[3px]" />
            </div>
            <div className="flex h-full w-[441px] items-center overflow-hidden bg-[#f0f0f0]">
              <Grip ml="ml-0" />
              <Tool icon={I.legend} label="图例识别" ml="ml-[8px]" />
              <Tool icon={I.shape} label="形识别" />
              <Tool icon={I.auto} label="自动识别" />
              <Sep />
              <Tool icon={I.sys} label="配电系统设置" ml="ml-[6px]" />
              <Sep />
              <Tool icon={I.align} label="平齐板顶" ml="ml-[6px]" />
              <Sep />
              <Tool icon={I.cad} label="CAD" ml="ml-[6px]" />
            </div>
          </div>
          <div className="min-h-0 flex-1 bg-black">
            <CadCanvas />
          </div>
        </div>
      </div>
    </div>
  );
}
